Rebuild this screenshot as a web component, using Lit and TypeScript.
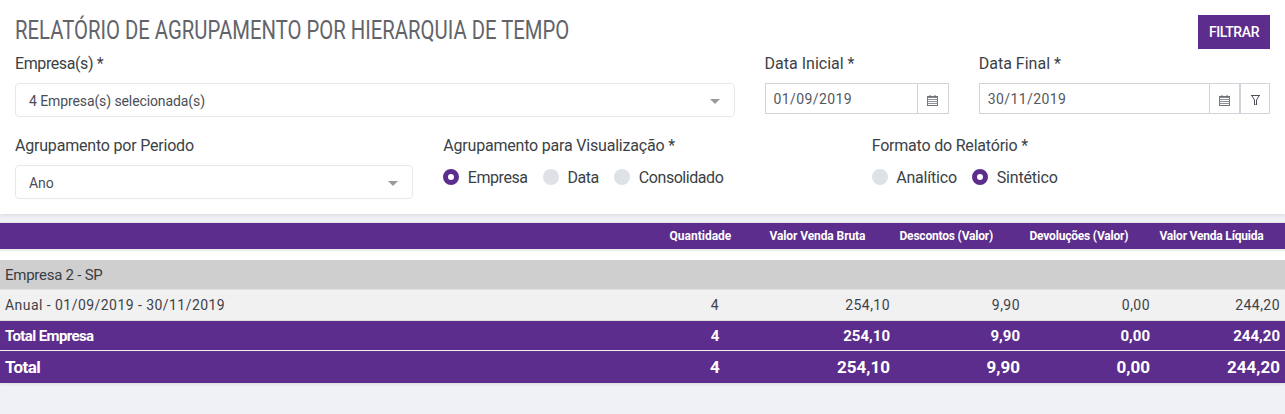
import { LitElement, html, css, svg } from "lit";
import { customElement } from "lit/decorators.js";

const calendar = svg`<svg class="ico" width="11" height="11" viewBox="0 0 11 11" fill="none" stroke="#6f7279" stroke-width="1"><rect x=".5" y="1.5" width="10" height="9"/><path d="M.5 2.5h10M.5 4.5h10M.5 6.5h10M.5 8.5h10" stroke="#8c8f95"/><path d="M3 0v3M8 0v3"/></svg>`;
const funnel = svg`<svg class="ico" width="9" height="10" viewBox="0 0 9 10" fill="none" stroke="#4d5058" stroke-width="1"><path d="M0 .5h9M1 1l2.5 4v5h2V5L8 1"/></svg>`;

@customElement("app-root")
export class AppRoot extends LitElement {
  static styles = css`
    :host { display: block; width: 1285px; height: 414px; overflow: hidden; background: #f0f1f5;
      font-family: "Roboto", sans-serif; color: #3b3f46; font-size: 16px; }
    .panel { background: #fff; height: 214px; box-sizing: border-box; padding: 15px 15px 0; box-shadow: 0 1px 4px rgba(0,0,0,.1); }
    .head { display: flex; justify-content: space-between; align-items: flex-start; height: 34px; }
    h1 { margin: 0; font-size: 25px; font-weight: 400; line-height: 32px; color: #62646a; white-space: nowrap; transform: scaleX(.812); transform-origin: left center; }
    .btn { width: 72px; height: 34px; background: #5c2d8c; color: #fff; border: 0; padding: 0; font: inherit; font-size: 14px; font-weight: 500; letter-spacing: -.4px; }
    .grid { display: grid; grid-template-columns: repeat(12, 1fr); margin: 0 -15px; }
    .f { padding: 0 15px; box-sizing: border-box; min-width: 0; }
    .c7 { grid-column: span 7; } .c2 { grid-column: span 2; } .c3 { grid-column: span 3; } .c4 { grid-column: span 4; }
    label { display: block; height: 34px; line-height: 30px; font-size: 16px; color: #3b3f46; letter-spacing: -.2px; }
    label.tight { letter-spacing: -.4px; }
    label.loose { letter-spacing: 0; }
    .rowa { height: 82px; }
    .select { height: 34px; box-sizing: border-box; border: 1px solid #e6e8eb; border-radius: 4px; display: flex; align-items: center;
      justify-content: space-between; padding: 2px 14px 0 13px; font-size: 14px; color: #4a4e58; letter-spacing: -.1px; }
    .caret { width: 0; height: 0; border: 5px solid transparent; border-top: 5px solid #9a9a9a; border-bottom: 0; }
    .date { height: 31px; box-sizing: border-box; border: 1px solid #d0d4da; display: flex; align-items: stretch; font-size: 14px; color: #55585f; letter-spacing: .4px; }
    .date .v { flex: 1; line-height: 31px; padding-left: 8px; }
    .date .ad { width: 30px; border-left: 1px solid #d0d4da; display: flex; align-items: center; justify-content: center; padding-top: 3px; box-sizing: content-box; }
    .date .ad.w { width: 29px; }
    .date .ad.fn { border-left-width: 2px; width: 28px; }
    .radios { display: flex; align-items: center; height: 24px; font-size: 16px; letter-spacing: -.45px; }
    .radios.wide { letter-spacing: -.2px; }
    .r { display: flex; align-items: center; margin-right: 15.5px; gap: 8.5px; }
    .dot { width: 16px; height: 16px; border-radius: 50%; background: #dee2e6; box-sizing: border-box; flex: none; }
    .dot.on { background: #fff; border: 5px solid #5c2d8c; }
    .table { margin-top: 9px; }
    .t { display: grid; grid-template-columns: 1fr 100px 130px 130px 130px 130px; align-items: center; }
    .t > div { padding: 0 5px; white-space: nowrap; }
    .t .n { text-align: right; }
    .t .q { text-align: center; }
    .th { height: 26px; background: #5c2d8c; color: #fff; font-weight: 700; font-size: 12px; box-shadow: 0 -1px 0 #e4e5ea; letter-spacing: -.2px; }
    .t.th > div { padding: 0 4.5px; }
    .t.th > div.sp { letter-spacing: 0; }
    .t.th > div.sb { letter-spacing: -.1px; }
    .gap { height: 9px; background: #fff; border-top: 2px solid #eceded; }
    .group { height: 29px; background: #cfcfcf; line-height: 30px; padding-left: 5px; font-size: 15px; color: #3a3d44; letter-spacing: -.25px; border-bottom: 1px solid #e2e2e2; }
    .row { height: 30px; background: #f1f1f1; font-size: 14px; color: #3f4249; border-bottom: 1px solid #dcdcdc; letter-spacing: .45px; }
    .te { height: 29px; background: #5c2d8c; color: #fff; font-weight: 700; font-size: 15px; }
    .tt { height: 32px; background: #5c2d8c; color: #fff; font-weight: 700; font-size: 17px; border-top: 1px solid #f2f2f2; box-shadow: 0 1px 3px rgba(0,0,0,.1); }
    .lab { letter-spacing: -.6px; }
    .ico { display: block; }
  `;

  private radio(label: string, on = false) {
    return html`<span class="r"><span class="dot ${on ? "on" : ""}"></span>${label}</span>`;
  }

  private cells(a: string, bold = false) {
    return html`<div class=${bold ? "lab" : ""}>${a}</div><div class="q">4</div><div class="n">254,10</div><div class="n">9,90</div><div class="n">0,00</div><div class="n">244,20</div>`;
  }

  render() {
    return html`
      <section class="panel">
        <div class="head"><h1>RELATÓRIO DE AGRUPAMENTO POR HIERARQUIA DE TEMPO</h1><button class="btn">FILTRAR</button></div>
        <div class="grid rowa">
          <div class="f c7"><label class="tight">Empresa(s) *</label><div class="select">4 Empresa(s) selecionada(s)<span class="caret"></span></div></div>
          <div class="f c2"><label class="loose">Data Inicial *</label><div class="date"><span class="v">01/09/2019</span><span class="ad">${calendar}</span></div></div>
          <div class="f c3"><label class="loose">Data Final *</label><div class="date"><span class="v">30/11/2019</span><span class="ad w">${calendar}</span><span class="ad fn">${funnel}</span></div></div>
        </div>
        <div class="grid">
          <div class="f c4"><label>Agrupamento por Periodo</label><div class="select">Ano<span class="caret"></span></div></div>
          <div class="f c4"><label>Agrupamento para Visualização *</label><div class="radios">${this.radio("Empresa", true)}${this.radio("Data")}${this.radio("Consolidado")}</div></div>
          <div class="f c4"><label>Formato do Relatório *</label><div class="radios wide">${this.radio("Analítico")}${this.radio("Sintético", true)}</div></div>
        </div>
      </section>
      <section class="table">
        <div class="t th"><div></div><div class="sp">Quantidade</div><div class="sb">Valor Venda Bruta</div><div>Descontos (Valor)</div><div>Devoluções (Valor)</div><div>Valor Venda Líquida</div></div>
        <div class="gap"></div>
        <div class="group">Empresa 2 - SP</div>
        <div class="t row">${this.cells("Anual - 01/09/2019 - 30/11/2019")}</div>
        <div class="t te">${this.cells("Total Empresa", true)}</div>
        <div class="t tt">${this.cells("Total", true)}</div>
      </section>
    `;
  }
}
